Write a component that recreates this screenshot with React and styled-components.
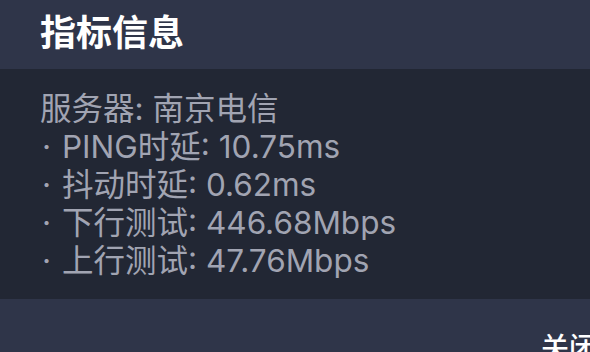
import styled, { createGlobalStyle } from "styled-components";

const GlobalStyle = createGlobalStyle`
  html, body {
    margin: 0;
    padding: 0;
    background: #2f3549;
  }
  body {
    font-family: Inter, "Noto Sans CJK SC", sans-serif;
  }
`;

const Dialog = styled.div`
  width: 590px;
  height: 352px;
  overflow: hidden;
  display: flex;
  flex-direction: column;
  background-color: #2f3549;
`;

const Header = styled.div`
  flex-shrink: 0;
  height: 69px;
  display: flex;
  align-items: center;
  padding: 0 40px;
  box-sizing: border-box;
  background-color: #2f3549;
`;

const Title = styled.h1`
  margin: -10px 0 0;
  color: #ffffff;
  font-size: 36px;
  font-weight: 700;
`;

const Body = styled.div`
  flex-shrink: 0;
  height: 230px;
  box-sizing: border-box;
  padding: 21px 40px 0;
  background-color: #222734;
`;

const Line = styled.div`
  color: #a1a4b2;
  font-size: 31.5px;
  line-height: 38px;
  white-space: nowrap;
`;

const Bullet = styled.span`
  display: inline-block;
  width: 20px;
  padding-left: 2px;
`;

const Footer = styled.div`
  flex: 1;
  display: flex;
  justify-content: flex-end;
  padding-top: 33px;
  background-color: #2f3549;
`;

const CloseButton = styled.button`
  border: none;
  background: transparent;
  color: #ffffff;
  font-family: inherit;
  font-size: 28px;
  font-weight: 500;
  padding: 0;
  margin-right: -7px;
  line-height: 32px;
  height: 32px;
  align-self: flex-start;
`;

const items = [
  "PING时延: 10.75ms",
  "抖动时延: 0.62ms",
  "下行测试: 446.68Mbps",
  "上行测试: 47.76Mbps",
];

export default function App() {
  return (
    <>
      <GlobalStyle />
      <Dialog>
        <Header>
          <Title>指标信息</Title>
        </Header>
        <Body>
          <Line>服务器: 南京电信</Line>
          {items.map((t) => (
            <Line key={t}>
              <Bullet>·</Bullet>
              {t}
            </Line>
          ))}
        </Body>
        <Footer>
          <CloseButton>关闭</CloseButton>
        </Footer>
      </Dialog>
    </>
  );
}
